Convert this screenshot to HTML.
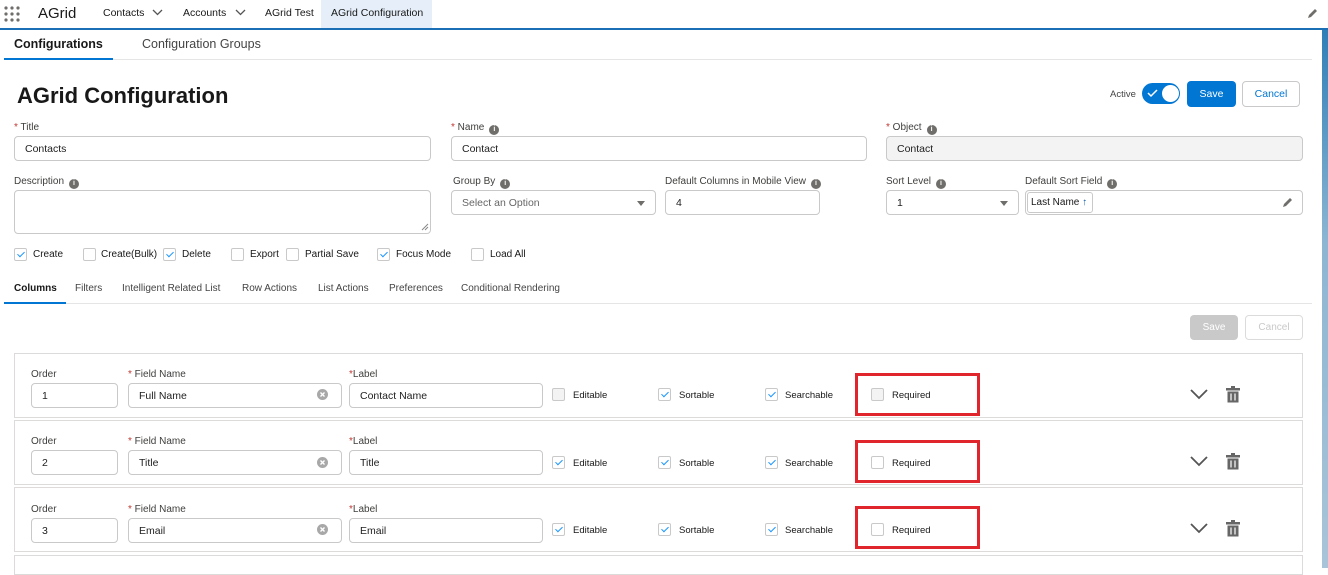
<!DOCTYPE html>
<html><head><meta charset="utf-8"><style>
*{box-sizing:border-box;margin:0;padding:0}
body{width:1328px;height:568px;overflow:hidden;background:#fff;font-family:"Liberation Sans",sans-serif;color:#181818;position:relative;font-size:11px}
.a{position:absolute;white-space:nowrap}
.in{position:absolute;border:1px solid #c9c9c9;border-radius:4px;background:#fff;height:25px;padding-left:10px;padding-top:2px;line-height:21px;font-size:10.5px;color:#222}
.lb{position:absolute;font-size:10px;color:#3e3e3c;white-space:nowrap}
.st{color:#c23934}
.info{display:inline-block;width:10px;height:10px;border-radius:50%;background:#706e6b;color:#fff;font-size:7px;line-height:10px;text-align:center;font-weight:bold;margin-left:5px;vertical-align:-1px}
.cb{position:absolute;width:13px;height:13px;border:1px solid #c9c9c9;border-radius:2px;background:#fff}
.cb.c::after{content:"";position:absolute;left:4px;top:1px;width:3px;height:6px;border:solid #1b96ff;border-width:0 1.5px 1.5px 0;transform:rotate(45deg)}
.cb.d{background:#f3f3f3}
.row{position:absolute;left:14px;width:1289px;border:1px solid #dddbda;height:65px}
.red{position:absolute;border:3px solid #e0262c}
.sel::after{content:"";position:absolute;right:10px;top:10px;border:4px solid transparent;border-top:5px solid #706e6b}
</style></head><body>
<div class="a" style="left:0;top:0;width:1328px;height:28px;background:#fff"></div>
<svg class="a" style="left:4px;top:6px" width="16" height="16"><g fill="#706e6b"><circle cx="2" cy="2" r="1.6"/><circle cx="8" cy="2" r="1.6"/><circle cx="14" cy="2" r="1.6"/><circle cx="2" cy="8" r="1.6"/><circle cx="8" cy="8" r="1.6"/><circle cx="14" cy="8" r="1.6"/><circle cx="2" cy="14" r="1.6"/><circle cx="8" cy="14" r="1.6"/><circle cx="14" cy="14" r="1.6"/></g></svg>
<div class="a" style="left:38px;top:5px;font-size:15px">AGrid</div>
<div class="a" style="left:103px;top:7px;font-size:10.5px">Contacts</div>
<svg class="a" style="left:152px;top:9px" width="11" height="8"><path d="M1 1l4.5 4.5L10 1" stroke="#555" fill="none" stroke-width="1.3"/></svg>
<div class="a" style="left:183px;top:7px;font-size:10.5px">Accounts</div>
<svg class="a" style="left:235px;top:9px" width="11" height="8"><path d="M1 1l4.5 4.5L10 1" stroke="#555" fill="none" stroke-width="1.3"/></svg>
<div class="a" style="left:265px;top:7px;font-size:10.5px">AGrid Test</div>
<div class="a" style="left:321px;top:0;width:111px;height:28px;background:#e6eff9"></div>
<div class="a" style="left:331px;top:7px;font-size:10.5px">AGrid Configuration</div>
<svg class="a" style="left:1307px;top:8px" width="11" height="11"><path d="M1 10l1-3 6-6 2 2-6 6z" fill="#706e6b"/></svg>
<div class="a" style="left:0;top:28px;width:1328px;height:2px;background:#1b6fb5"></div>
<div class="a" style="left:1322px;top:30px;width:6px;height:538px;background:linear-gradient(#2f7fb8,#8db6d3 40%,#a9c4d8)"></div>
<div class="a" style="left:14px;top:37px;font-size:12.5px;font-weight:bold">Configurations</div>
<div class="a" style="left:142px;top:37px;font-size:12.5px;color:#444">Configuration Groups</div>
<div class="a" style="left:4px;top:59px;width:1308px;height:1px;background:#e5e5e5"></div>
<div class="a" style="left:4px;top:58px;width:109px;height:2px;background:#0176d3"></div>
<div class="a" style="left:17px;top:83px;font-size:22px;font-weight:bold">AGrid Configuration</div>
<div class="a" style="left:1110px;top:89px;font-size:9.5px;color:#444">Active</div>
<div class="a" style="left:1142px;top:83px;width:38px;height:21px;border-radius:11px;background:#0176d3"></div>
<div class="a" style="left:1162px;top:85px;width:17px;height:17px;border-radius:50%;background:#fff"></div>
<svg class="a" style="left:1147px;top:89px" width="11" height="9"><path d="M1 4l3 3 6-6" stroke="#fff" fill="none" stroke-width="1.5"/></svg>
<div class="a" style="left:1187px;top:81px;width:49px;height:26px;border-radius:4px;background:#0176d3;color:#fff;font-size:10.5px;text-align:center;line-height:26px">Save</div>
<div class="a" style="left:1242px;top:81px;width:58px;height:26px;border-radius:4px;border:1px solid #c9c9c9;color:#0176d3;font-size:10.5px;text-align:center;line-height:24px">Cancel</div>
<div class="lb" style="left:14px;top:122px"><span class="st">*</span> Title</div>
<div class="in" style="left:14px;top:136px;width:417px">Contacts</div>
<div class="lb" style="left:451px;top:122px"><span class="st">*</span> Name<span class="info">i</span></div>
<div class="in" style="left:451px;top:136px;width:416px">Contact</div>
<div class="lb" style="left:886px;top:122px"><span class="st">*</span> Object<span class="info">i</span></div>
<div class="in" style="left:886px;top:136px;width:417px;background:#f3f3f3">Contact</div>
<div class="lb" style="left:14px;top:176px">Description<span class="info">i</span></div>
<div class="in" style="left:14px;top:190px;width:417px;height:44px"></div>
<div class="lb" style="left:453px;top:176px">Group By<span class="info">i</span></div>
<div class="in sel" style="left:451px;top:190px;width:205px;color:#666">Select an Option</div>
<div class="lb" style="left:665px;top:176px">Default Columns in Mobile View<span class="info">i</span></div>
<div class="in" style="left:665px;top:190px;width:155px">4</div>
<div class="lb" style="left:886px;top:176px">Sort Level<span class="info">i</span></div>
<div class="in sel" style="left:886px;top:190px;width:133px">1</div>
<div class="lb" style="left:1025px;top:176px">Default Sort Field<span class="info">i</span></div>
<div class="in" style="left:1025px;top:190px;width:278px"></div>
<div class="a" style="left:1027px;top:192px;width:66px;height:21px;border:1px solid #c9c9c9;border-radius:3px;font-size:10px;line-height:19px;padding-left:3px">Last Name <span style="color:#0b5cab;font-weight:bold">↑</span></div>
<svg class="a" style="left:1282px;top:197px" width="11" height="11"><path d="M1 10l1-3 6-6 2 2-6 6z" fill="#706e6b"/></svg>
<div class="cb c" style="left:14px;top:248px"></div><div class="a" style="left:33px;top:249px;font-size:10px">Create</div>
<div class="cb" style="left:83px;top:248px"></div><div class="a" style="left:101px;top:249px;font-size:10px">Create(Bulk)</div>
<div class="cb c" style="left:163px;top:248px"></div><div class="a" style="left:182px;top:249px;font-size:10px">Delete</div>
<div class="cb" style="left:231px;top:248px"></div><div class="a" style="left:250px;top:249px;font-size:10px">Export</div>
<div class="cb" style="left:286px;top:248px"></div><div class="a" style="left:305px;top:249px;font-size:10px">Partial Save</div>
<div class="cb c" style="left:377px;top:248px"></div><div class="a" style="left:396px;top:249px;font-size:10px">Focus Mode</div>
<div class="cb" style="left:471px;top:248px"></div><div class="a" style="left:490px;top:249px;font-size:10px">Load All</div>
<div class="a" style="left:14px;top:283px;font-size:10px;font-weight:bold">Columns</div>
<div class="a" style="left:75px;top:283px;font-size:10px;color:#444">Filters</div>
<div class="a" style="left:122px;top:283px;font-size:10px;color:#444">Intelligent Related List</div>
<div class="a" style="left:242px;top:283px;font-size:10px;color:#444">Row Actions</div>
<div class="a" style="left:318px;top:283px;font-size:10px;color:#444">List Actions</div>
<div class="a" style="left:389px;top:283px;font-size:10px;color:#444">Preferences</div>
<div class="a" style="left:461px;top:283px;font-size:10px;color:#444">Conditional Rendering</div>
<div class="a" style="left:4px;top:303px;width:1308px;height:1px;background:#e5e5e5"></div>
<div class="a" style="left:4px;top:302px;width:62px;height:2px;background:#0176d3"></div>
<div class="a" style="left:1190px;top:315px;width:48px;height:25px;border-radius:4px;background:#c9c9c9;color:#fff;font-size:10px;text-align:center;line-height:25px">Save</div>
<div class="a" style="left:1245px;top:315px;width:58px;height:25px;border-radius:4px;border:1px solid #dddbda;color:#c9c9c9;font-size:10px;text-align:center;line-height:23px">Cancel</div>
<div class="row" style="top:353px"></div>
<div class="row" style="top:420px"></div>
<div class="row" style="top:487px"></div>
<div class="row" style="top:555px;height:20px"></div>
<div class="lb" style="left:31px;top:369px">Order</div><div class="lb" style="left:128px;top:369px"><span class="st">*</span> Field Name</div><div class="lb" style="left:349px;top:369px"><span class="st">*</span>Label</div>
<div class="in" style="left:31px;top:383px;width:87px">1</div>
<div class="in" style="left:128px;top:383px;width:214px">Full Name</div>
<div class="in" style="left:349px;top:383px;width:194px">Contact Name</div>
<div class="cb d" style="left:552px;top:388px"></div><div class="a" style="left:573px;top:390px;font-size:9.5px">Editable</div>
<div class="cb c" style="left:658px;top:388px"></div><div class="a" style="left:679px;top:390px;font-size:9.5px">Sortable</div>
<div class="cb c" style="left:765px;top:388px"></div><div class="a" style="left:785px;top:390px;font-size:9.5px">Searchable</div>
<div class="cb d" style="left:871px;top:388px"></div><div class="a" style="left:892px;top:390px;font-size:9.5px">Required</div>
<div class="red" style="left:855px;top:373px;width:125px;height:43px"></div>
<div class="lb" style="left:31px;top:436px">Order</div><div class="lb" style="left:128px;top:436px"><span class="st">*</span> Field Name</div><div class="lb" style="left:349px;top:436px"><span class="st">*</span>Label</div>
<div class="in" style="left:31px;top:450px;width:87px">2</div>
<div class="in" style="left:128px;top:450px;width:214px">Title</div>
<div class="in" style="left:349px;top:450px;width:194px">Title</div>
<div class="cb c" style="left:552px;top:456px"></div><div class="a" style="left:573px;top:458px;font-size:9.5px">Editable</div>
<div class="cb c" style="left:658px;top:456px"></div><div class="a" style="left:679px;top:458px;font-size:9.5px">Sortable</div>
<div class="cb c" style="left:765px;top:456px"></div><div class="a" style="left:785px;top:458px;font-size:9.5px">Searchable</div>
<div class="cb" style="left:871px;top:456px"></div><div class="a" style="left:892px;top:458px;font-size:9.5px">Required</div>
<div class="red" style="left:855px;top:440px;width:125px;height:43px"></div>
<div class="lb" style="left:31px;top:504px">Order</div><div class="lb" style="left:128px;top:504px"><span class="st">*</span> Field Name</div><div class="lb" style="left:349px;top:504px"><span class="st">*</span>Label</div>
<div class="in" style="left:31px;top:518px;width:87px">3</div>
<div class="in" style="left:128px;top:518px;width:214px">Email</div>
<div class="in" style="left:349px;top:518px;width:194px">Email</div>
<div class="cb c" style="left:552px;top:523px"></div><div class="a" style="left:573px;top:525px;font-size:9.5px">Editable</div>
<div class="cb c" style="left:658px;top:523px"></div><div class="a" style="left:679px;top:525px;font-size:9.5px">Sortable</div>
<div class="cb c" style="left:765px;top:523px"></div><div class="a" style="left:785px;top:525px;font-size:9.5px">Searchable</div>
<div class="cb" style="left:871px;top:523px"></div><div class="a" style="left:892px;top:525px;font-size:9.5px">Required</div>
<div class="red" style="left:855px;top:506px;width:125px;height:43px"></div>
<svg class="a" style="left:317px;top:389px" width="11" height="11"><circle cx="5.5" cy="5.5" r="5.5" fill="#a8a8a8"/><path d="M3.5 3.5l4 4M7.5 3.5l-4 4" stroke="#fff" stroke-width="1.4"/></svg>
<svg class="a" style="left:317px;top:457px" width="11" height="11"><circle cx="5.5" cy="5.5" r="5.5" fill="#a8a8a8"/><path d="M3.5 3.5l4 4M7.5 3.5l-4 4" stroke="#fff" stroke-width="1.4"/></svg>
<svg class="a" style="left:317px;top:524px" width="11" height="11"><circle cx="5.5" cy="5.5" r="5.5" fill="#a8a8a8"/><path d="M3.5 3.5l4 4M7.5 3.5l-4 4" stroke="#fff" stroke-width="1.4"/></svg>
<svg class="a" style="left:1190px;top:386px" width="60" height="18"><path d="M1 4l8 8 8-8" stroke="#555" fill="none" stroke-width="1.8"/><g transform="translate(36,0)"><rect x="5" y="0" width="4" height="2" fill="#666"/><rect x="0" y="2" width="14" height="2.5" fill="#666"/><path d="M1.5 5.5h11v11h-11z" fill="#666"/><path d="M5 7.5v7M9 7.5v7" stroke="#fff" stroke-width="1.2"/></g></svg>
<svg class="a" style="left:1190px;top:453px" width="60" height="18"><path d="M1 4l8 8 8-8" stroke="#555" fill="none" stroke-width="1.8"/><g transform="translate(36,0)"><rect x="5" y="0" width="4" height="2" fill="#666"/><rect x="0" y="2" width="14" height="2.5" fill="#666"/><path d="M1.5 5.5h11v11h-11z" fill="#666"/><path d="M5 7.5v7M9 7.5v7" stroke="#fff" stroke-width="1.2"/></g></svg>
<svg class="a" style="left:1190px;top:520px" width="60" height="18"><path d="M1 4l8 8 8-8" stroke="#555" fill="none" stroke-width="1.8"/><g transform="translate(36,0)"><rect x="5" y="0" width="4" height="2" fill="#666"/><rect x="0" y="2" width="14" height="2.5" fill="#666"/><path d="M1.5 5.5h11v11h-11z" fill="#666"/><path d="M5 7.5v7M9 7.5v7" stroke="#fff" stroke-width="1.2"/></g></svg>
<svg class="a" style="left:421px;top:223px" width="8" height="8"><path d="M7 1L1 7M7 4L4 7" stroke="#888"/></svg>
</body></html>
